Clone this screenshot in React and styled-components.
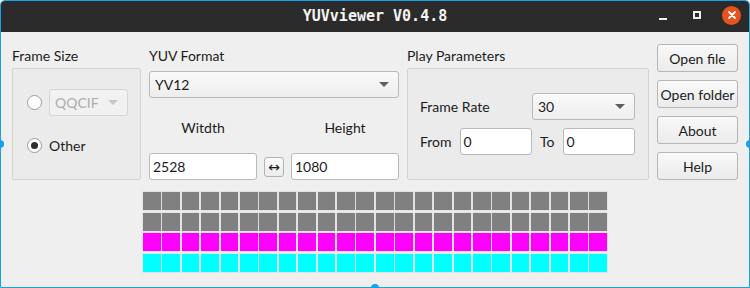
import React from "react";
import styled, { createGlobalStyle } from "styled-components";

const GlobalStyle = createGlobalStyle`
  html, body { margin: 0; padding: 0; background: #efefef; }
  * { box-sizing: border-box; }
`;

const Window = styled.div`
  position: relative;
  width: 750px;
  height: 288px;
  border: 1px solid #17a0ee;
  border-radius: 5px 5px 0 0;
  background: #efefef;
  display: flex;
  flex-direction: column;
  font-family: Lato, "Liberation Sans", sans-serif;
  font-size: 14px;
  color: #1c1c1c;
`;

const TitleBar = styled.div`
  height: 31px;
  background: #2b2b2b;
  border-radius: 4px 4px 0 0;
  display: grid;
  grid-template-columns: 1fr auto 1fr;
  align-items: center;
`;

const Title = styled.div`
  grid-column: 2;
  font-family: "DejaVu Sans Mono", monospace;
  font-weight: bold;
  font-size: 15px;
  color: #f4f4f4;
  margin-top: -2px;
`;

const Controls = styled.div`
  grid-column: 3;
  justify-self: end;
  display: flex;
  gap: 16px;
  padding-right: 8px;
  margin-top: -3px;
`;

const Ctrl = styled.div`
  width: 18px;
  height: 18px;
  display: flex;
  align-items: ${(p) => (p.$min ? "flex-end" : "center")};
  justify-content: center;
  padding-bottom: ${(p) => (p.$min ? "4px" : "0")};
`;

const MinLine = styled.div`
  width: 8px;
  height: 2px;
  background: #f0f0f0;
`;

const MaxBox = styled.div`
  width: 8px;
  height: 8px;
  border: 2px solid #f0f0f0;
`;

const CloseBtn = styled.div`
  width: 19px;
  height: 19px;
  border-radius: 50%;
  background: #e6531f;
  display: flex;
  align-items: center;
  justify-content: center;
`;

const Content = styled.div`
  flex: 1;
  display: flex;
  flex-direction: column;
  padding: 12px 11px 0 11px;
`;

const TopRow = styled.div`
  display: flex;
  gap: 8px;
`;

const Column = styled.div`
  width: ${(p) => p.$w}px;
  display: flex;
  flex-direction: column;
`;

const SectionLabel = styled.div`
  height: 24px;
  line-height: 24px;
`;

const GroupBox = styled.div`
  height: 112px;
  border: 1px solid #d3d3d3;
  border-radius: 2px;
  background: #ebebeb;
  display: flex;
  flex-direction: column;
  justify-content: center;
  gap: ${(p) => p.$gap}px;
  padding: ${(p) => p.$pad};
`;

const Row = styled.div`
  display: flex;
  align-items: center;
  gap: ${(p) => p.$gap ?? 7}px;
  min-height: 27px;
`;

const Grow = styled.span`
  flex: 1;
`;

const Radio = styled.div`
  width: 15px;
  height: 15px;
  flex: none;
  border-radius: 50%;
  border: 1px solid #9c9c9c;
  background: #fff;
  display: flex;
  align-items: center;
  justify-content: center;
  &::after {
    content: "";
    display: ${(p) => (p.$checked ? "block" : "none")};
    width: 7px;
    height: 7px;
    border-radius: 50%;
    background: #2e2e2e;
  }
`;

const Combo = styled.div`
  height: 27px;
  flex: ${(p) => (p.$w ? "none" : "1")};
  width: ${(p) => (p.$w ? `${p.$w}px` : "auto")};
  margin-top: ${(p) => p.$mt ?? 0}px;
  border: 1px solid ${(p) => (p.$disabled ? "#d6d6d6" : "#b9b9b9")};
  border-radius: 3px;
  background: ${(p) =>
    p.$disabled ? "#f1f1f1" : "linear-gradient(#fafafa, #ededed)"};
  color: ${(p) => (p.$disabled ? "#adadad" : "#1c1c1c")};
  display: flex;
  align-items: center;
  justify-content: space-between;
  padding: 0 9px 0 5px;
`;

const Arrow = styled.div`
  width: 0;
  height: 0;
  border-left: 5px solid transparent;
  border-right: 5px solid transparent;
  border-top: 5px solid ${(p) => (p.$disabled ? "#c8c8c8" : "#5e5e5e")};
`;

const DimGrid = styled.div`
  display: grid;
  grid-template-columns: 108px 20px 1fr;
  grid-template-rows: 55px 27px;
  column-gap: 7px;
`;

const DimLabel = styled.div`
  grid-column: ${(p) => p.$col};
  align-self: center;
  text-align: center;
  padding-top: 3px;
`;

const Input = styled.div`
  height: 27px;
  border: 1px solid #b9b9b9;
  border-radius: 3px;
  background: #fff;
  display: flex;
  align-items: center;
  padding: 0 3px;
  min-width: 0;
`;

const SwapBtn = styled.div`
  align-self: center;
  width: 20px;
  height: 20px;
  border: 1px solid #b3b3b3;
  border-radius: 3px;
  background: linear-gradient(#fafafa, #ececec);
  display: flex;
  align-items: center;
  justify-content: center;
  font-family: "DejaVu Sans", sans-serif;
  font-size: 14px;
  line-height: 1;
`;

const RangeRow = styled.div`
  display: grid;
  grid-template-columns: auto 1fr auto 1fr;
  align-items: center;
  column-gap: 8px;
`;

const ButtonCol = styled.div`
  width: 81px;
  display: flex;
  flex-direction: column;
  gap: 8px;
`;

const Button = styled.div`
  height: 28px;
  border: 1px solid #b5b5b5;
  border-radius: 3px;
  background: linear-gradient(#f9f9f9, #ebebeb);
  display: flex;
  align-items: center;
  justify-content: center;
`;

const Swatches = styled.div`
  align-self: center;
  margin-top: 12px;
  width: 464px;
  height: 80px;
  display: grid;
  grid-template-columns: repeat(24, 1fr);
  grid-template-rows: repeat(4, 1fr);
  column-gap: 1.8px;
  row-gap: 2.6px;
`;

const Cell = styled.div`
  background: ${(p) => p.$c};
  box-shadow: 0 0 0 0.5px #d8d8d8;
`;

const Handle = styled.div`
  position: absolute;
  width: 8px;
  height: 8px;
  border-radius: 50%;
  background: #17a0ee;
  ${(p) => p.$pos}
`;

const rows = ["#808080", "#808080", "#ff00ff", "#00ffff"];

export default function App() {
  return (
    <>
      <GlobalStyle />
      <Window>
        <TitleBar>
          <Title>YUVviewer V0.4.8</Title>
          <Controls>
            <Ctrl $min>
              <MinLine />
            </Ctrl>
            <Ctrl>
              <MaxBox />
            </Ctrl>
            <CloseBtn>
              <svg width="10" height="10" viewBox="0 0 10 10">
                <path
                  d="M2 2 L8 8 M8 2 L2 8"
                  stroke="#fff"
                  strokeWidth="1.8"
                  strokeLinecap="round"
                />
              </svg>
            </CloseBtn>
          </Controls>
        </TitleBar>
        <Content>
          <TopRow>
            <Column $w={129}>
              <SectionLabel>Frame Size</SectionLabel>
              <GroupBox $gap={16} $pad="0 12px 0 14px">
                <Row $gap={7}>
                  <Radio />
                  <Combo $disabled>
                    <span>QQCIF</span>
                    <Arrow $disabled />
                  </Combo>
                </Row>
                <Row $gap={7}>
                  <Radio $checked />
                  <span>Other</span>
                </Row>
              </GroupBox>
            </Column>
            <Column $w={250}>
              <SectionLabel>YUV Format</SectionLabel>
              <Combo $mt={3}>
                <span>YV12</span>
                <Arrow />
              </Combo>
              <DimGrid>
                <DimLabel $col={1}>Witdth</DimLabel>
                <DimLabel $col={3}>Height</DimLabel>
                <Input>2528</Input>
                <SwapBtn>↔</SwapBtn>
                <Input>1080</Input>
              </DimGrid>
            </Column>
            <Column $w={242}>
              <SectionLabel>Play Parameters</SectionLabel>
              <GroupBox $gap={8} $pad="0 13px 0 12px">
                <Row $gap={0}>
                  <Grow>Frame Rate</Grow>
                  <Combo $w={103}>
                    <span>30</span>
                    <Arrow />
                  </Combo>
                </Row>
                <RangeRow>
                  <span>From</span>
                  <Input>0</Input>
                  <span>To</span>
                  <Input>0</Input>
                </RangeRow>
              </GroupBox>
            </Column>
            <ButtonCol>
              <Button>Open file</Button>
              <Button>Open folder</Button>
              <Button>About</Button>
              <Button>Help</Button>
            </ButtonCol>
          </TopRow>
          <Swatches>
            {rows.map((c, r) =>
              Array.from({ length: 24 }, (_, i) => <Cell key={`${r}-${i}`} $c={c} />)
            )}
          </Swatches>
        </Content>
        <Handle $pos="left: -5px; top: 139px;" />
        <Handle $pos="right: -5px; top: 139px;" />
        <Handle $pos="left: 370px; bottom: -5px;" />
      </Window>
    </>
  );
}
